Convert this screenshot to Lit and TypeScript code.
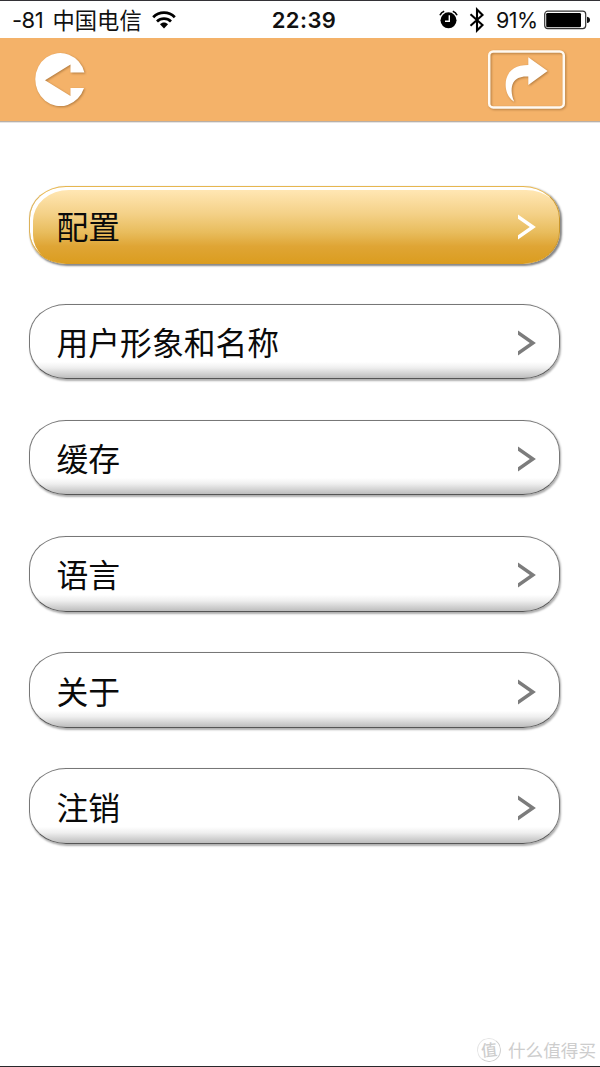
import { LitElement, html, css } from "lit";
import { customElement, property } from "lit/decorators.js";
import { classMap } from "lit/directives/class-map.js";

@customElement("status-bar")
class StatusBar extends LitElement {
  static styles = css`
    :host {
      display: grid;
      grid-template-columns: 1fr auto 1fr;
      height: 38px;
      box-sizing: border-box;
      border-top: 1px solid #333136;
      padding: 0 10px 0 12px;
      align-items: center;
      background: #fff;
      color: #111;
      font: 22px/36px "Inter", "Noto Sans CJK SC", sans-serif;
    }
    .side { display: flex; align-items: center; height: 37px; white-space: nowrap; }
    .right { justify-content: flex-end; }
    .signal { width: 35px; font-size: 22px; letter-spacing: -0.5px; }
    .carrier { width: 90px; margin-left: 5.5px; padding-bottom: 1px; font: 22.3px/36px "Noto Sans CJK SC", sans-serif; }
    .time { padding-left: 6px; font-weight: 600; font-size: 22px; letter-spacing: 0.4px; }
    .percent { width: 42px; margin-left: 11.5px; font-size: 21.5px; letter-spacing: -0.6px; }
    .wifi { margin-left: 9px; }
    .bt { margin-left: 10.5px; }
    .battery { margin-left: 6px; }
    svg { display: block; flex: none; }
  `;
  render() {
    return html`
      <div class="side">
        <span class="signal">-81</span>
        <span class="carrier">中国电信</span>
        <svg class="wifi" width="24" height="18" viewBox="0 0 24 18">
          <g fill="none" stroke="#000" stroke-width="2.8">
            <path d="M1.2 6.2C7.2.2 16.8.2 22.8 6.2" />
            <path d="M5 10.4c4-3.8 10-3.8 14 0" />
          </g>
          <path d="M8 13.2c2.4-2.2 5.6-2.2 8 0L12 17.4z" fill="#000" />
        </svg>
      </div>
      <div class="time">22:39</div>
      <div class="side right">
        <svg width="19" height="19" viewBox="0 0 19 19">
          <circle cx="9.5" cy="10.3" r="8" fill="#000" />
          <path d="M1 5.2Q2.2 2.2 5.2 1.2M18 5.2Q16.8 2.2 13.8 1.2" fill="none" stroke="#000" stroke-width="1.7" />
          <path d="M10.3 5.2v6H6" fill="none" stroke="#fff" stroke-width="1.4" />
        </svg>
        <svg class="bt" width="16" height="26" viewBox="0 0 16 26">
          <path d="M1.5 7.3 13.5 18 8 23.5v-21L13.5 8 1.5 18.7" fill="none" stroke="#000" stroke-width="2.1" />
        </svg>
        <span class="percent">91%</span>
        <svg class="battery" width="46" height="20" viewBox="0 0 46 20">
          <rect x=".7" y="1.2" width="41" height="17.4" rx="3" fill="#fff" stroke="#333" stroke-width="1.2" />
          <rect x="2.2" y="2.9" width="34.8" height="14.4" rx="1.4" fill="#000" />
          <path d="M43 6.8q3 .5 3 3.1t-3 3.1z" fill="#111" />
        </svg>
      </div>
    `;
  }
}

@customElement("nav-header")
class NavHeader extends LitElement {
  static styles = css`
    :host {
      display: flex;
      justify-content: space-between;
      align-items: flex-start;
      height: 85px;
      box-sizing: border-box;
      padding: 12px 33px 0;
      background: linear-gradient(#f4b269 0 83px, #b9afa6 83px 84px, #e6e4e2 84px);
    }
    svg { display: block; overflow: visible; filter: drop-shadow(1px 1px 0.8px rgba(90, 50, 10, 0.42)); }
  `;
  render() {
    return html`
      <svg width="54" height="58" viewBox="33 50 54 58">
        <path
          fill="#fff"
          d="M84.4 72.5A25 26.5 0 1 0 84 88H70.5V96L45 80.2 70.5 64.6V72.5Z"
        />
      </svg>
      <svg width="79" height="60" viewBox="488 50 79 60">
        <rect x="489.2" y="51.4" width="74.6" height="56" rx="4" fill="none" stroke="#fffaf2" stroke-width="2.5" />
        <path
          fill="#fff"
          d="M528.3 57.3 547.6 71 528.3 85V76.6C515 75.5 507.5 84 514.2 101.8 506.5 97 504.4 87 506.3 79 509 69 517 65 528.3 65Z"
        />
      </svg>
    `;
  }
}

@customElement("menu-row")
class MenuRow extends LitElement {
  @property() label = "";
  @property({ type: Boolean }) active = false;

  static styles = css`
    :host { display: block; }
    .row {
      display: flex;
      align-items: center;
      justify-content: space-between;
      box-sizing: border-box;
      height: 75.5px;
      padding: 0 22.5px 0 26.5px;
      border: 1px solid #777;
      border-bottom-color: #555;
      border-radius: 37px / 32px;
      background: linear-gradient(#fff 0 78%, #efefef 86%, #bdbdbd 100%);
      box-shadow: 1px 1.5px 2px rgba(0, 0, 0, 0.32);
      color: #0a0a0a;
      font: 31.8px/46px "Noto Sans CJK SC", sans-serif;
    }
    .active {
      height: 78px;
      border-color: #e6b650 #c9962c #d99c22 #dcb25a;
      background: linear-gradient(#ffe6b2 5%, #f4d188 35%, #e8bc5c 60%, #dfa535 78%, #db9d20 100%);
      box-shadow: inset 3px 3px 0.6px #fff, 1.5px 1.5px 2px rgba(0, 0, 0, 0.48);
    }
    .label { padding-bottom: 1px; }
    .chevron { display: block; flex: none; margin-top: 3px; fill: #7c7c7c; }
    .active .chevron { fill: #fff; }
  `;
  render() {
    return html`
      <div class=${classMap({ row: true, active: this.active })}>
        <span class="label">${this.label}</span>
        <svg class="chevron" width="19" height="26" viewBox="0 0 19 26">
          <path d="M0 .4 17.9 13 0 25.6V21.3L11.8 13 0 4.7Z" />
        </svg>
      </div>
    `;
  }
}

@customElement("app-root")
class AppRoot extends LitElement {
  private items = ["配置", "用户形象和名称", "缓存", "语言", "关于", "注销"];

  static styles = css`
    :host {
      display: flex;
      flex-direction: column;
      box-sizing: border-box;
      height: 1067px;
      background: #fff;
      border-bottom: 1px solid #29282b;
      overflow: hidden;
    }
    .menu {
      display: flex;
      flex-direction: column;
      gap: 40.7px;
      padding: 63px 40px 0 29px;
    }
    .first { margin-bottom: -1px; }
    .mark {
      display: flex;
      align-items: center;
      justify-content: flex-end;
      gap: 7px;
      margin-top: auto;
      padding: 0 4px 3px 0;
      color: #cdcdcd;
      font: 17.6px/26px "Noto Sans CJK SC", sans-serif;
    }
    .badge {
      box-sizing: border-box;
      width: 24px;
      height: 24px;
      border: 1px solid #d0d0d0;
      border-left-color: #e6e6e6;
      border-top-color: #e6e6e6;
      border-radius: 50%;
      font-size: 16px;
      font-weight: 500;
      line-height: 21px;
      text-align: center;
      transform: rotate(-6deg);
    }
  `;
  render() {
    return html`
      <status-bar></status-bar>
      <nav-header></nav-header>
      <div class="menu">
        ${this.items.map(
          (label, i) => html`<menu-row class=${i === 0 ? "first" : ""} .label=${label} ?active=${i === 0}></menu-row>`
        )}
      </div>
      <div class="mark"><span class="badge">值</span><span>什么值得买</span></div>
    `;
  }
}
